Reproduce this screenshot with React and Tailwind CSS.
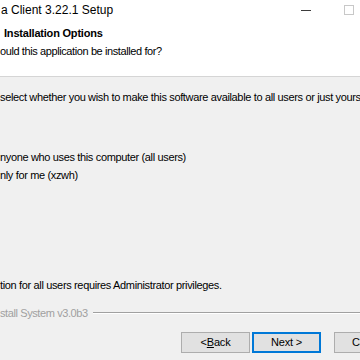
import React from 'react';

const font = { fontFamily: '"Liberation Sans", Arial, sans-serif' };

const Button = ({ children, focused }) => (
  <div
    className={`w-[69px] h-[21px] shrink-0 flex items-center justify-center text-[11px] tracking-[-0.2px] text-black bg-[#e1e1e1] border ${
      focused ? 'border-[#0078d7] border-2' : 'border-[#adadad]'
    }`}
  >
    {children}
  </div>
);

export default function App() {
  return (
    <div
      className="w-[360px] h-[360px] overflow-hidden bg-[#f0f0f0] text-black whitespace-nowrap"
      style={font}
    >
      {/* Header with title bar */}
      <div className="h-[77px] bg-white border-b border-[#d5d5d5]">
        <div className="h-[25px] flex items-start">
          <div className="pt-[2px] pl-[1px] text-[12px] leading-[16px] flex-1">a Client 3.22.1 Setup</div>
          <div className="w-[43px] pt-[10px]">
            <div className="w-[10px] h-[1px] bg-[#3c3c3c]" />
          </div>
          <div className="w-[10px] pt-[5px]">
            <div className="w-[10px] h-[10px] border border-[#c8c8c8]" />
          </div>
          <div className="w-[6px]" />
        </div>
        <div className="pl-[4px] text-[11px] leading-[16px] font-bold tracking-[-0.2px]">Installation Options</div>
        <div className="mt-[2px] text-[11px] leading-[16px] tracking-[-0.4px]">
          ould this application be installed for?
        </div>
      </div>

      {/* Body */}
      <div className="text-[11px] leading-[16px] tracking-[-0.35px]">
        <div className="pt-[12px]">
          select whether you wish to make this software available to all users or just yours.
        </div>
        <div className="mt-[44px]">nyone who uses this computer (all users)</div>
        <div className="mt-[2px]">nly for me (xzwh)</div>
        <div className="mt-[94px]">tion for all users requires Administrator privileges.</div>
      </div>

      {/* Footer branding */}
      <div className="mt-[12px] flex items-center gap-[5px]">
        <span className="text-[11px] leading-[16px] tracking-[-0.4px] text-[#a0a0a0]">stall System v3.0b3</span>
        <div className="flex-1 flex flex-col">
          <div className="h-[1px] bg-[#a0a0a0]" />
          <div className="h-[1px] bg-white" />
        </div>
      </div>

      {/* Buttons */}
      <div className="mt-[11px] flex pl-[181px]">
        <Button>
          &lt; <span className="underline">B</span>ack
        </Button>
        <div className="w-[2px] shrink-0" />
        <Button focused>Next &gt;</Button>
        <div className="w-[13px] shrink-0" />
        <Button>Cancel</Button>
      </div>
    </div>
  );
}
